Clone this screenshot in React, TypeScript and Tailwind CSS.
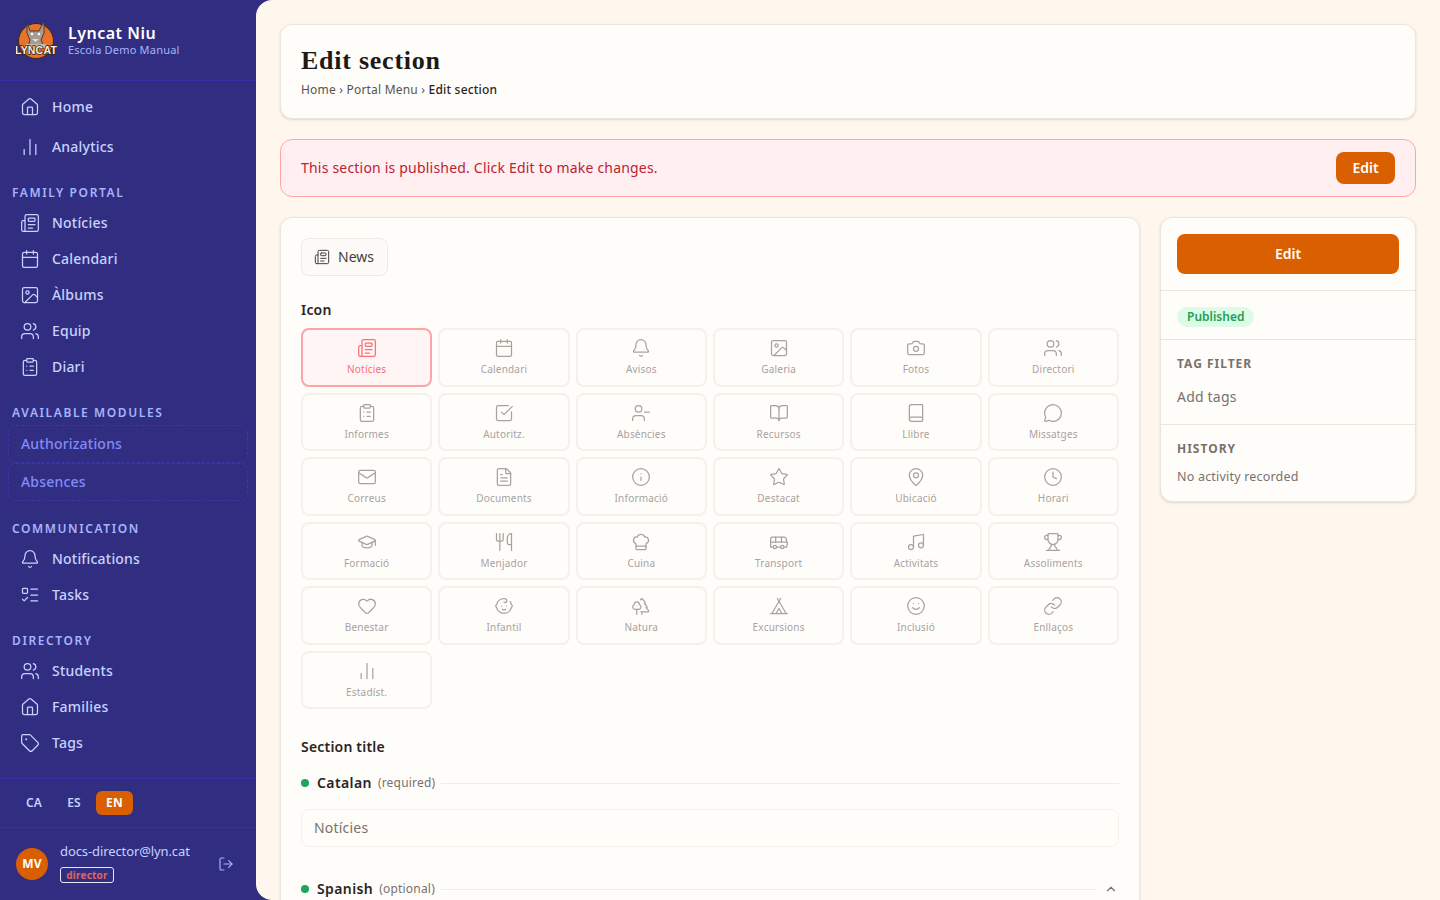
import {
  Baby, Bell, Book, BookOpen, Bus, Calendar, Camera, ChartNoAxesColumn, ChefHat, ChevronUp, ClipboardList,
  Clock, FileText, GraduationCap, Heart, House, Image, Info, Link, ListTodo, LogOut, Mail, MapPin, MessageCircle,
  Music, Newspaper, Smile, SquareCheckBig, Star, Tag, Tent, Trees, Trophy, UserMinus, Users, Utensils,
} from "lucide-react";

const iconOptions = [
  { icon: Newspaper, label: "Notícies" },
  { icon: Calendar, label: "Calendari" },
  { icon: Bell, label: "Avisos" },
  { icon: Image, label: "Galeria" },
  { icon: Camera, label: "Fotos" },
  { icon: Users, label: "Directori" },
  { icon: ClipboardList, label: "Informes" },
  { icon: SquareCheckBig, label: "Autoritz." },
  { icon: UserMinus, label: "Absències" },
  { icon: BookOpen, label: "Recursos" },
  { icon: Book, label: "Llibre" },
  { icon: MessageCircle, label: "Missatges" },
  { icon: Mail, label: "Correus" },
  { icon: FileText, label: "Documents" },
  { icon: Info, label: "Informació" },
  { icon: Star, label: "Destacat" },
  { icon: MapPin, label: "Ubicació" },
  { icon: Clock, label: "Horari" },
  { icon: GraduationCap, label: "Formació" },
  { icon: Utensils, label: "Menjador" },
  { icon: ChefHat, label: "Cuina" },
  { icon: Bus, label: "Transport" },
  { icon: Music, label: "Activitats" },
  { icon: Trophy, label: "Assoliments" },
  { icon: Heart, label: "Benestar" },
  { icon: Baby, label: "Infantil" },
  { icon: Trees, label: "Natura" },
  { icon: Tent, label: "Excursions" },
  { icon: Smile, label: "Inclusió" },
  { icon: Link, label: "Enllaços" },
  { icon: ChartNoAxesColumn, label: "Estadíst." },
];

function NavItem({ icon: Icon, label, tall }: { icon: any; label: string; tall?: boolean }) {
  return (
    <div className={`flex items-center gap-3 pl-5 text-sm font-medium text-[#c7d2fe] ${tall ? "h-10" : "h-9"}`}>
      <Icon size={20} strokeWidth={1.5} />
      <span>{label}</span>
    </div>
  );
}

function SectionLabel({ children, first }: { children: string; first?: boolean }) {
  return (
    <div className={`pl-3 pb-[4px] text-xs leading-4 font-semibold tracking-[1.6px] text-[#a5b4fc] ${first ? "pt-[18px]" : "pt-[20px]"}`}>
      {children}
    </div>
  );
}

function ModuleLink({ label }: { label: string }) {
  return (
    <div className="mx-2 flex h-[38px] items-center rounded-lg border border-dashed border-[#3b36ad] px-3 text-sm font-medium text-[#818cf8]">
      {label}
    </div>
  );
}

function Logo() {
  return (
    <svg width="42" height="42" viewBox="0 0 42 42" className="shrink-0">
      <circle cx="20" cy="22" r="17.5" fill="#e8722a" stroke="#3a2416" strokeWidth="1" />
      <path d="M11 3l3 9h9l5-10 0 12-3 7 3 7H12l2-7-3-7z" fill="#a39c94" stroke="#3a2416" strokeWidth="0.8" />
      <circle cx="16" cy="15" r="1.3" fill="#fff" />
      <circle cx="23" cy="15" r="1.3" fill="#fff" />
      <path d="M16 20h7l-3.5 3z" fill="#f6d9c0" />
      <path d="M10 25h20v4H10z" fill="#c4bbb1" />
      <text x="20" y="35" textAnchor="middle" fontFamily="Liberation Sans" fontWeight="700" fontSize="10.5" fill="#fdeedd" stroke="#3a2416" strokeWidth="1.6" paintOrder="stroke">
        LYNCAT
      </text>
    </svg>
  );
}

function Sidebar() {
  return (
    <aside className="flex h-full w-64 shrink-0 flex-col">
      <div className="flex h-[81px] items-center gap-[10px] border-b border-[#3730a3] pl-4">
        <Logo />
        <div className="mb-[1px]">
          <div className="text-base leading-[19px] font-semibold tracking-[0.5px] text-white">Lyncat Niu</div>
          <div className="text-[11px] leading-[13px] text-[#a5b4fc]">Escola Demo Manual</div>
        </div>
      </div>

      <nav className="flex-1 pt-[6px]">
        <NavItem icon={House} label="Home" tall />
        <NavItem icon={ChartNoAxesColumn} label="Analytics" tall />
        <SectionLabel first>FAMILY PORTAL</SectionLabel>
        <NavItem icon={Newspaper} label="Notícies" />
        <NavItem icon={Calendar} label="Calendari" />
        <NavItem icon={Image} label="Àlbums" />
        <NavItem icon={Users} label="Equip" />
        <NavItem icon={ClipboardList} label="Diari" />
        <SectionLabel>AVAILABLE MODULES</SectionLabel>
        <ModuleLink label="Authorizations" />
        <ModuleLink label="Absences" />
        <SectionLabel>COMMUNICATION</SectionLabel>
        <NavItem icon={Bell} label="Notifications" />
        <NavItem icon={ListTodo} label="Tasks" />
        <SectionLabel>DIRECTORY</SectionLabel>
        <NavItem icon={Users} label="Students" />
        <NavItem icon={House} label="Families" />
        <NavItem icon={Tag} label="Tags" />
      </nav>

      <div className="flex h-[50px] items-center border-t border-b border-[#3730a3] pl-4 text-xs font-semibold text-[#c7d2fe]">
        <span className="flex h-6 w-9 items-center justify-center">CA</span>
        <span className="ml-[4px] flex h-6 w-9 items-center justify-center">ES</span>
        <span className="ml-[4px] flex h-6 w-[37px] items-center justify-center rounded-md bg-[#d95f00] font-bold text-white">EN</span>
      </div>

      <div className="flex h-[72px] items-center pl-4 pr-[22px]">
        <div className="flex size-8 items-center justify-center rounded-full bg-[#d95f00] text-xs font-bold text-white">MV</div>
        <div className="ml-3 mb-[2px] flex-1">
          <div className="text-[13px] leading-4 tracking-[-0.1px] text-[#c7d2fe]">docs-director@lyn.cat</div>
          <div className="mt-2 flex h-4 w-[54px] items-center justify-center rounded-[3px] border border-[#e0e7ff] text-[10px] font-bold text-[#e0655f]">
            director
          </div>
        </div>
        <LogOut size={16} strokeWidth={1.75} className="text-[#a5b4fc]" />
      </div>
    </aside>
  );
}

function IconGrid() {
  return (
    <div className="mt-2 grid grid-cols-6 gap-[6px]">
      {iconOptions.map((option, i) => {
        const Icon = option.icon;
        const active = i === 0;
        return (
          <div
            key={option.label}
            className={`flex h-[58.5px] flex-col items-center justify-center gap-[4px] rounded-lg border-2 ${
              active ? "border-[#fca5a5] bg-[#fff5f5] text-[#f87171]" : "border-[#f5f0eb] text-[#a8a29e]"
            }`}
          >
            <Icon size={20} strokeWidth={1.5} />
            <span className="text-[10px] leading-[14px]">{option.label}</span>
          </div>
        );
      })}
    </div>
  );
}

function LanguageRow({ name, hint, collapsible }: { name: string; hint: string; collapsible?: boolean }) {
  return (
    <div className="flex items-center">
      <span className="size-2 rounded-full bg-[#22a55b]" />
      <span className="ml-2 text-sm font-semibold tracking-[0.4px] text-[#292524]">{name}</span>
      <span className="ml-[6px] text-xs text-[#78716c]">{hint}</span>
      <span className="ml-[6px] h-px flex-1 bg-[#f3ebe5]" />
      {collapsible && <ChevronUp size={14} className="ml-[8px] mr-[1px] text-[#78716c]" />}
    </div>
  );
}

function SidePanel() {
  return (
    <div className="w-64 shrink-0 self-start rounded-xl border border-[#ece5de] bg-[#fffdfa] shadow-sm">
      <div className="border-b border-[#ece5de] p-4">
        <button className="h-10 w-full rounded-lg bg-[#d95f00] text-sm font-semibold tracking-normal text-white">Edit</button>
      </div>
      <div className="border-b border-[#ece5de] px-4 pt-4 pb-3">
        <span className="flex h-5 w-fit items-center rounded-full bg-[#dcfce7] px-[10px] text-xs font-semibold tracking-normal text-[#22a055]">Published</span>
      </div>
      <div className="h-[85px] border-b border-[#ece5de] px-4 pt-4">
        <div className="text-xs leading-4 font-bold tracking-[1px] text-[#78716c]">TAG FILTER</div>
        <div className="mt-[15px] text-sm leading-5 text-[#78716c]">Add tags</div>
      </div>
      <div className="h-[76px] px-4 pt-4">
        <div className="text-xs leading-4 font-bold tracking-[1px] text-[#78716c]">HISTORY</div>
        <div className="mt-[10px] text-[12.5px] leading-5 text-[#78716c]">No activity recorded</div>
      </div>
    </div>
  );
}

export default function App() {
  return (
    <div className="flex h-screen overflow-hidden bg-[#312e81] font-['Noto_Sans',sans-serif] tracking-[0.2px]">
      <Sidebar />
      <main className="flex-1 overflow-hidden rounded-l-2xl bg-[#fff7ed] p-6">
        <div className="h-[95px] rounded-xl border border-[#ece5de] bg-[#fffdfa] px-5 pt-[19px] shadow-sm">
          <h1 className="font-['Liberation_Serif',serif] text-[26px] leading-[34px] font-bold tracking-[0.75px] text-[#1c1917]">Edit section</h1>
          <div className="mt-[2px] text-xs leading-5 text-[#57534e]">
            Home › Portal Menu › <span className="font-medium text-[#292524]">Edit section</span>
          </div>
        </div>

        <div className="mt-5 flex h-[58px] items-center justify-between rounded-xl border border-[#fca5a5] bg-[#ffeff0] pr-5 pl-5 text-sm text-[#be2035]">
          <span>This section is published. Click Edit to make changes.</span>
          <button className="h-8 w-[59px] rounded-lg bg-[#d95f00] text-sm font-semibold tracking-normal text-white">Edit</button>
        </div>

        <div className="mt-5 flex gap-5">
          <div className="h-[800px] flex-1 rounded-xl border border-[#ece5de] bg-[#fffdfa] px-5 pt-5 shadow-sm">
            <div className="inline-flex h-[38px] items-center gap-2 rounded-lg border border-[#efe9e3] bg-[#fdfbf8] pr-[13px] pl-3 text-sm tracking-normal text-[#44403c]">
              <Newspaper size={16} strokeWidth={1.5} />
              News
            </div>
            <div className="mt-6 text-sm leading-5 font-semibold text-[#292524]">Icon</div>
            <IconGrid />
            <div className="mt-7 text-sm leading-5 font-semibold text-[#292524]">Section title</div>
            <div className="mt-4">
              <LanguageRow name="Catalan" hint="(required)" />
            </div>
            <div className="mt-4 flex h-[38px] items-center rounded-lg border border-[#f5efe9] px-3 text-sm text-[#78716c]">Notícies</div>
            <div className="mt-8">
              <LanguageRow name="Spanish" hint="(optional)" collapsible />
            </div>
          </div>
          <SidePanel />
        </div>
      </main>
    </div>
  );
}
